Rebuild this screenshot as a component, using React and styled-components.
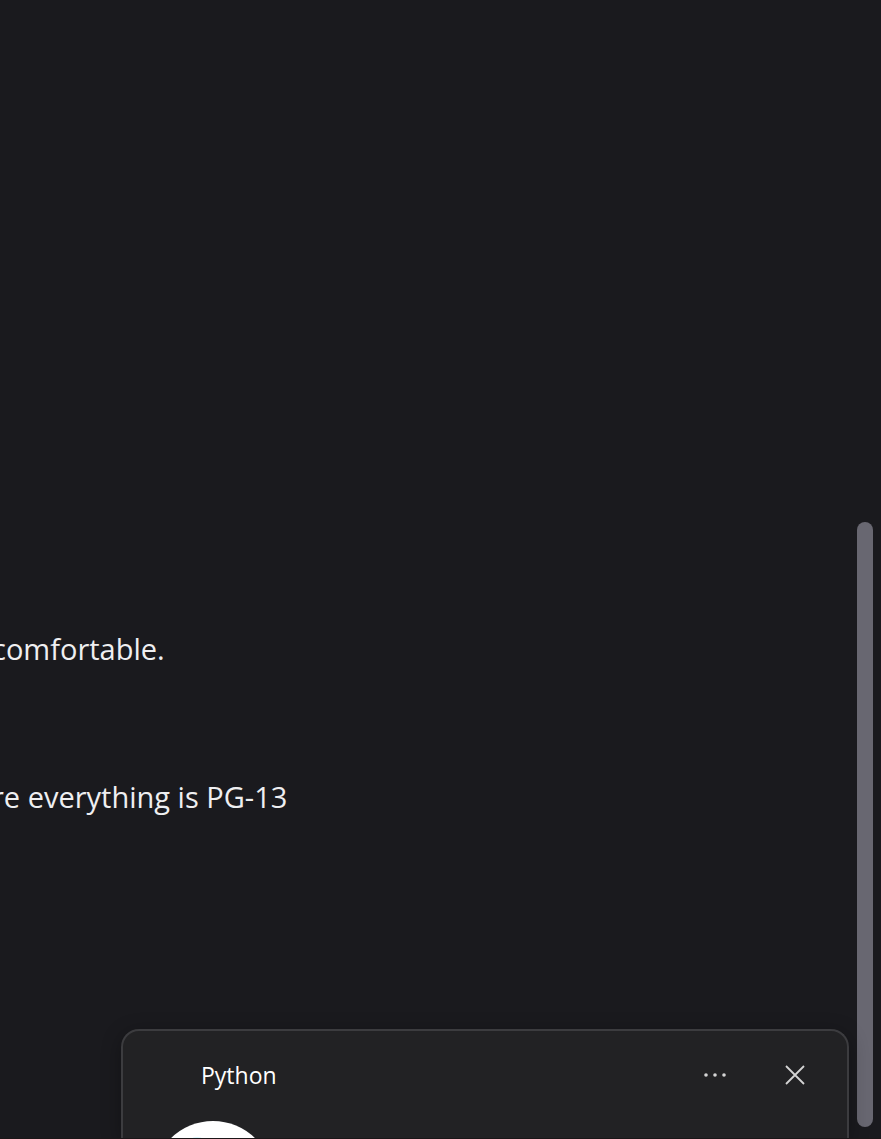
import React from "react";
import styled, { createGlobalStyle } from "styled-components";

const GlobalStyle = createGlobalStyle`
  * { box-sizing: border-box; }
  body {
    margin: 0;
    background: #1a1a1e;
    font-family: "Open Sans", "Noto Sans", sans-serif;
  }
`;

const Page = styled.div`
  position: relative;
  display: flex;
  height: 100vh;
  overflow: hidden;
  background: #1a1a1e;
`;

const Messages = styled.main`
  flex: 1;
  min-width: 0;
  display: flex;
  flex-direction: column;
  justify-content: flex-end;
  align-items: flex-start;
  gap: 104px;
  padding-bottom: 320px;
  overflow: hidden;
`;

const Message = styled.p`
  margin: 0 0 0 -8px;
  font-size: 29px;
  line-height: 44px;
  white-space: nowrap;
  color: #efeff1;
`;

const ScrollTrack = styled.div`
  flex: none;
  display: flex;
  flex-direction: column;
  justify-content: flex-end;
  width: 24px;
  padding: 0 8px 12px 0;
`;

const ScrollThumb = styled.div`
  height: 53.7%;
  border-radius: 8px;
  background: #686771;
`;

const Toast = styled.section`
  position: absolute;
  left: 121px;
  right: 32px;
  bottom: 0;
  height: 110px;
  overflow: hidden;
  border: 2px solid #3c3c3f;
  border-bottom: 0;
  border-radius: 18px 18px 0 0;
  background: #222224;
  box-shadow: 0 4px 20px rgba(0, 0, 0, 0.3);
`;

const ToastHeader = styled.header`
  display: flex;
  align-items: center;
  height: 88px;
  margin-bottom: 2px;
  padding: 0 32px 0 78px;
`;

const ToastTitle = styled.h2`
  flex: 1;
  margin: 0;
  font-size: 23px;
  font-weight: 400;
  line-height: 32px;
  color: #fff;
`;

const IconButton = styled.button`
  display: flex;
  align-items: center;
  justify-content: center;
  width: 40px;
  height: 40px;
  margin-left: 40px;
  padding: 0;
  border: 0;
  background: transparent;
  color: #d4d4d4;
`;

const Avatar = styled.div`
  display: flex;
  justify-content: center;
  width: 120px;
  height: 120px;
  margin-left: 30px;
  padding-top: 15px;
  border-radius: 50%;
  background: #fff;
`;

const BottomEdge = styled.div`
  position: absolute;
  left: 0;
  right: 0;
  bottom: 0;
  height: 1px;
  background: #1b1618;
`;

export default function App() {
  return (
    <Page>
      <GlobalStyle />
      <Messages>
        <Message>comfortable.</Message>
        <Message>re everything is PG-13</Message>
      </Messages>
      <ScrollTrack>
        <ScrollThumb />
      </ScrollTrack>
      <Toast>
        <ToastHeader>
          <ToastTitle>Python</ToastTitle>
          <IconButton aria-label="More options">
            <svg width="24" height="24" viewBox="0 0 24 24" fill="currentColor">
              <circle cx="3" cy="12" r="1.8" />
              <circle cx="12" cy="12" r="1.8" />
              <circle cx="21" cy="12" r="1.8" />
            </svg>
          </IconButton>
          <IconButton aria-label="Close">
            <svg width="24" height="24" viewBox="0 0 24 24" fill="none" stroke="currentColor" strokeWidth="1.8">
              <path d="M3 3L21 21M21 3L3 21" />
            </svg>
          </IconButton>
        </ToastHeader>
        <Avatar>
          <svg width="40" height="6" viewBox="0 0 40 6">
            <ellipse cx="4" cy="3" rx="5" ry="2" fill="#d9f6fc" />
          </svg>
        </Avatar>
      </Toast>
      <BottomEdge />
    </Page>
  );
}
